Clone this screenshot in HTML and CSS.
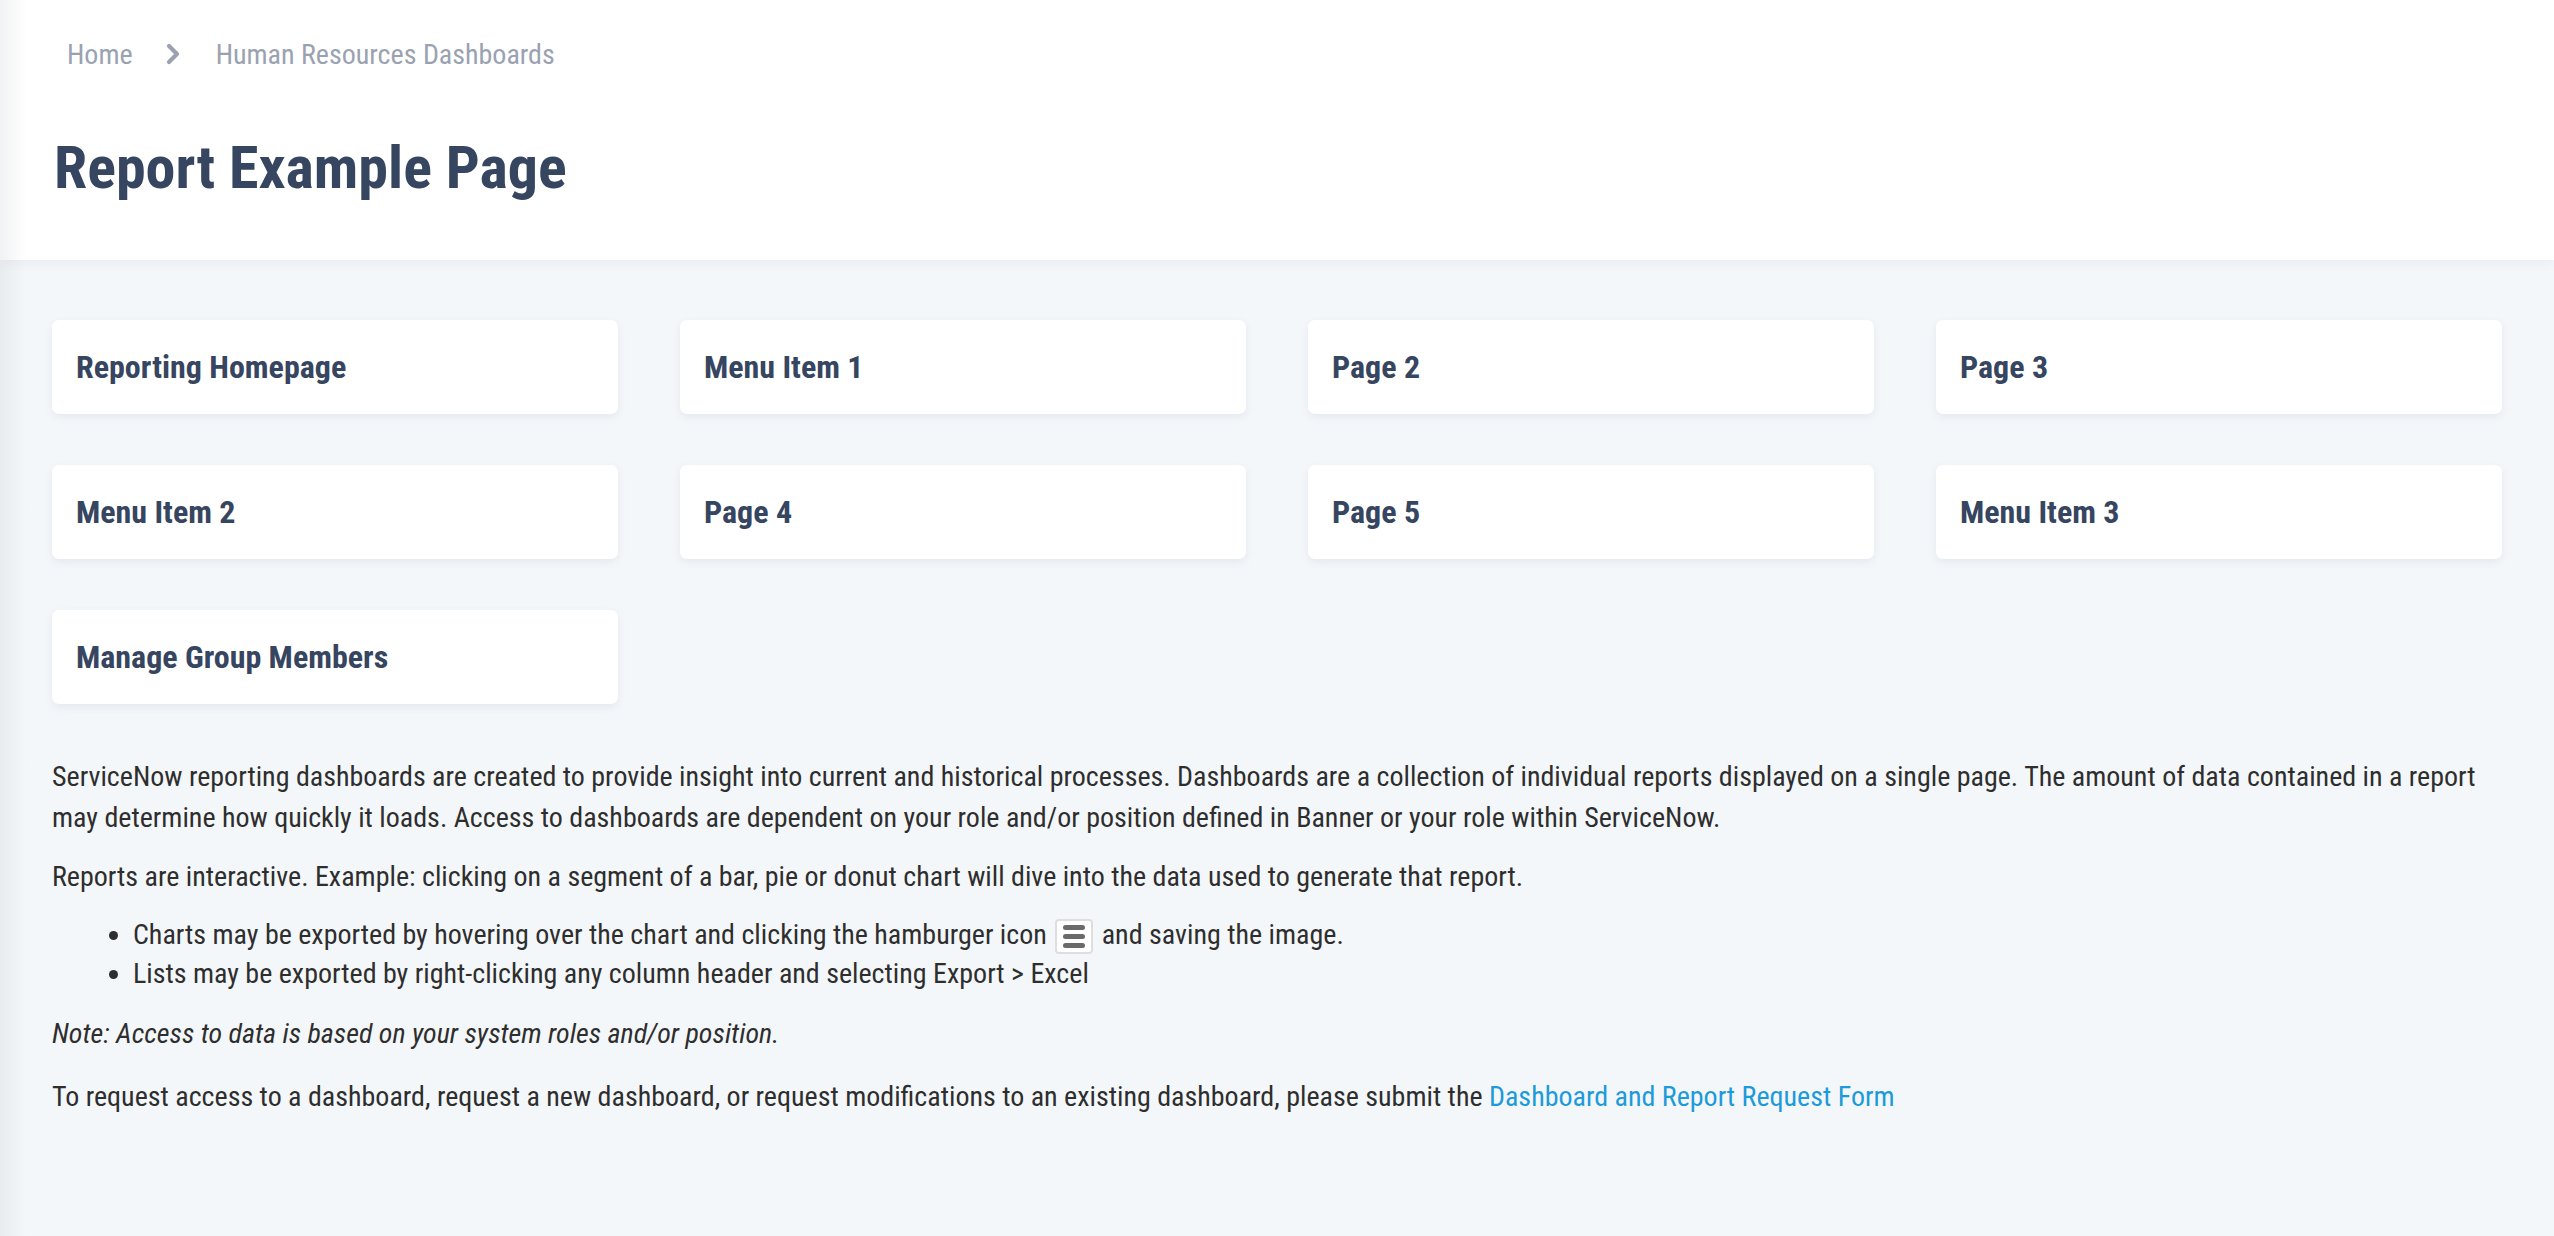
FILE: index.html
```html
<!DOCTYPE html>
<html lang="en">
<head>
<meta charset="utf-8">
<title>Report Example Page</title>
<link rel="stylesheet" href="styles.css">
</head>
<body>
<div class="page">
  <header class="page-header">
    <nav class="breadcrumb">
      <a class="crumb" href="#">Home</a>
      <svg class="chev" width="16" height="22" viewBox="0 0 16 22"><path d="M3 3 L11 11 L3 19" fill="none" stroke="#9aa2b1" stroke-width="4.2" stroke-linecap="round" stroke-linejoin="round"/></svg>
      <a class="crumb" href="#">Human Resources Dashboards</a>
    </nav>
    <h1 class="title">Report Example Page</h1>
  </header>
  <main class="content">
    <div class="tiles">
      <a class="tile" href="#">Reporting Homepage</a>
      <a class="tile" href="#">Menu Item 1</a>
      <a class="tile" href="#">Page 2</a>
      <a class="tile" href="#">Page 3</a>
      <a class="tile" href="#">Menu Item 2</a>
      <a class="tile" href="#">Page 4</a>
      <a class="tile" href="#">Page 5</a>
      <a class="tile" href="#">Menu Item 3</a>
      <a class="tile" href="#">Manage Group Members</a>
    </div>
    <div class="text">
      <p>ServiceNow reporting dashboards are created to provide insight into current and historical processes. Dashboards are a collection of individual reports displayed on a single page. The amount of data contained in a report may determine how quickly it loads. Access to dashboards are dependent on your role and/or position defined in Banner or your role within ServiceNow.</p>
      <p>Reports are interactive. Example: clicking on a segment of a bar, pie or donut chart will dive into the data used to generate that report.</p>
      <ul>
        <li>Charts may be exported by hovering over the chart and clicking the hamburger icon <span class="burger"><span></span><span></span><span></span></span> and saving the image.</li>
        <li>Lists may be exported by right-clicking any column header and selecting Export &gt; Excel</li>
      </ul>
      <p class="note"><em>Note: Access to data is based on your system roles and/or position.</em></p>
      <p>To request access to a dashboard, request a new dashboard, or request modifications to an existing dashboard, please submit the <a class="link" href="#">Dashboard and Report Request Form</a></p>
    </div>
  </main>
</div>
</body>
</html>
```

FILE: styles.css
```css
* { box-sizing: border-box; }
html, body { margin: 0; padding: 0; }
body {
  font-family: "Roboto Condensed", Roboto, "Liberation Sans", sans-serif;
  background: #f4f7fa;
  color: #2e2e2e;
  min-height: 1236px;
}
.page {
  min-height: 1236px;
  background: linear-gradient(to right, #e9ecef 0, #f4f7fa 26px);
}
.page-header {
  background: linear-gradient(to right, #f1f2f4 0, #ffffff 26px);
  height: 260px;
  padding: 0 0 0 54px;
  box-shadow: 0 4px 10px rgba(40, 60, 90, 0.05);
  position: relative;
}
.breadcrumb {
  display: flex;
  align-items: center;
  height: 108px;
  padding-left: 13px;
  font-size: 28px;
}
.crumb {
  color: #9aa2b1;
  text-decoration: none;
}
.chev { margin: 0 34px 0 33px; }
.title {
  margin: 0;
  font-size: 60px;
  font-weight: 700;
  color: #364560;
  line-height: 120px;
}
.content {
  padding: 60px 34px 60px 52px;
}
.tiles {
  display: grid;
  grid-template-columns: repeat(4, 1fr);
  column-gap: 62px;
  row-gap: 51px;
  margin-right: 18px;
  margin-bottom: 52px;
}
.tile {
  display: flex;
  align-items: center;
  height: 94px;
  padding: 0 24px;
  background: #fff;
  border-radius: 7px;
  box-shadow: 0 3px 8px rgba(40, 60, 90, 0.08);
  color: #364560;
  font-size: 32px;
  font-weight: 700;
  text-decoration: none;
}
.text {
  font-size: 28px;
  line-height: 41px;
}
.text p { margin: 0 0 18px; }
.text p.note { margin-bottom: 22px; }
.text ul {
  margin: 0 0 20px;
  padding-left: 81px;
}
.text li { line-height: 39px; }
.burger {
  display: inline-flex;
  flex-direction: column;
  justify-content: center;
  gap: 4px;
  width: 38px;
  height: 35px;
  vertical-align: middle;
  margin: 0 2px;
  border: 2px solid #dedede;
  border-radius: 4px;
  background: #fff;
  padding: 0 6px;
}
.burger span {
  display: block;
  height: 5px;
  border-radius: 2.5px;
  background: #6a6a6a;
}
.link {
  color: #1d9ad9;
  text-decoration: none;
}
```
